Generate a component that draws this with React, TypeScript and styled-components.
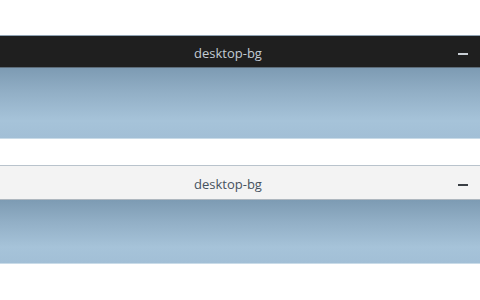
import React, { FC } from 'react'
import styled, { createGlobalStyle } from 'styled-components'

const GlobalStyle = createGlobalStyle`
  html, body {
    margin: 0;
    padding: 0;
    background: #ffffff;
  }
  body {
    font-family: 'Open Sans', 'Noto Sans', sans-serif;
  }
`

const Page = styled.div`
  width: 480px;
  height: 300px;
  display: flex;
  flex-direction: column;
  gap: 26px;
  padding-top: 35px;
  box-sizing: border-box;
  overflow: hidden;
`

const Window = styled.div<{ $dark?: boolean }>`
  display: flex;
  flex-direction: column;
  border-top: 1px solid ${(p) => (p.$dark ? '#8fa3b4' : '#b9c3cc')};
  border-bottom: 1px solid #c9dbe8;
`

// title sits a bit left of centre, the button area is kept out of it
const TitleBar = styled.div<{ $dark?: boolean; $height: number }>`
  position: relative;
  height: ${(p) => p.$height}px;
  display: flex;
  align-items: center;
  justify-content: center;
  padding-right: 24px;
  background: ${(p) => (p.$dark ? '#1f1f1f' : '#f3f3f3')};
  border-bottom: 1px solid ${(p) => (p.$dark ? '#5d6c79' : '#aeb7bf')};
`

const Title = styled.span<{ $dark?: boolean }>`
  font-size: 13px;
  margin-top: 2px;
  color: ${(p) => (p.$dark ? '#c3ccd4' : '#46525e')};
`

const Minimize = styled.span<{ $dark?: boolean }>`
  position: absolute;
  right: 12px;
  top: 50%;
  width: 10px;
  height: 2px;
  margin-top: 1px;
  background: ${(p) => (p.$dark ? '#c8ced4' : '#3a3f44')};
`

const Wallpaper = styled.div<{ $height: number }>`
  height: ${(p) => p.$height}px;
  background: linear-gradient(
    180deg,
    #7d9bb3 0%,
    #92afc6 35%,
    #a6c3d9 75%,
    #a2bfd6 100%
  );
`

type WinProps = { dark?: boolean; barHeight: number; bodyHeight: number }

const DesktopWindow: FC<WinProps> = ({ dark, barHeight, bodyHeight }) => (
  <Window $dark={dark}>
    <TitleBar $dark={dark} $height={barHeight}>
      <Title $dark={dark}>desktop-bg</Title>
      <Minimize $dark={dark} />
    </TitleBar>
    <Wallpaper $height={bodyHeight} />
  </Window>
)

const App: FC = () => (
  <>
    <GlobalStyle />
    <Page>
      <DesktopWindow dark barHeight={31} bodyHeight={70} />
      <DesktopWindow barHeight={33} bodyHeight={63} />
    </Page>
  </>
)

export default App
